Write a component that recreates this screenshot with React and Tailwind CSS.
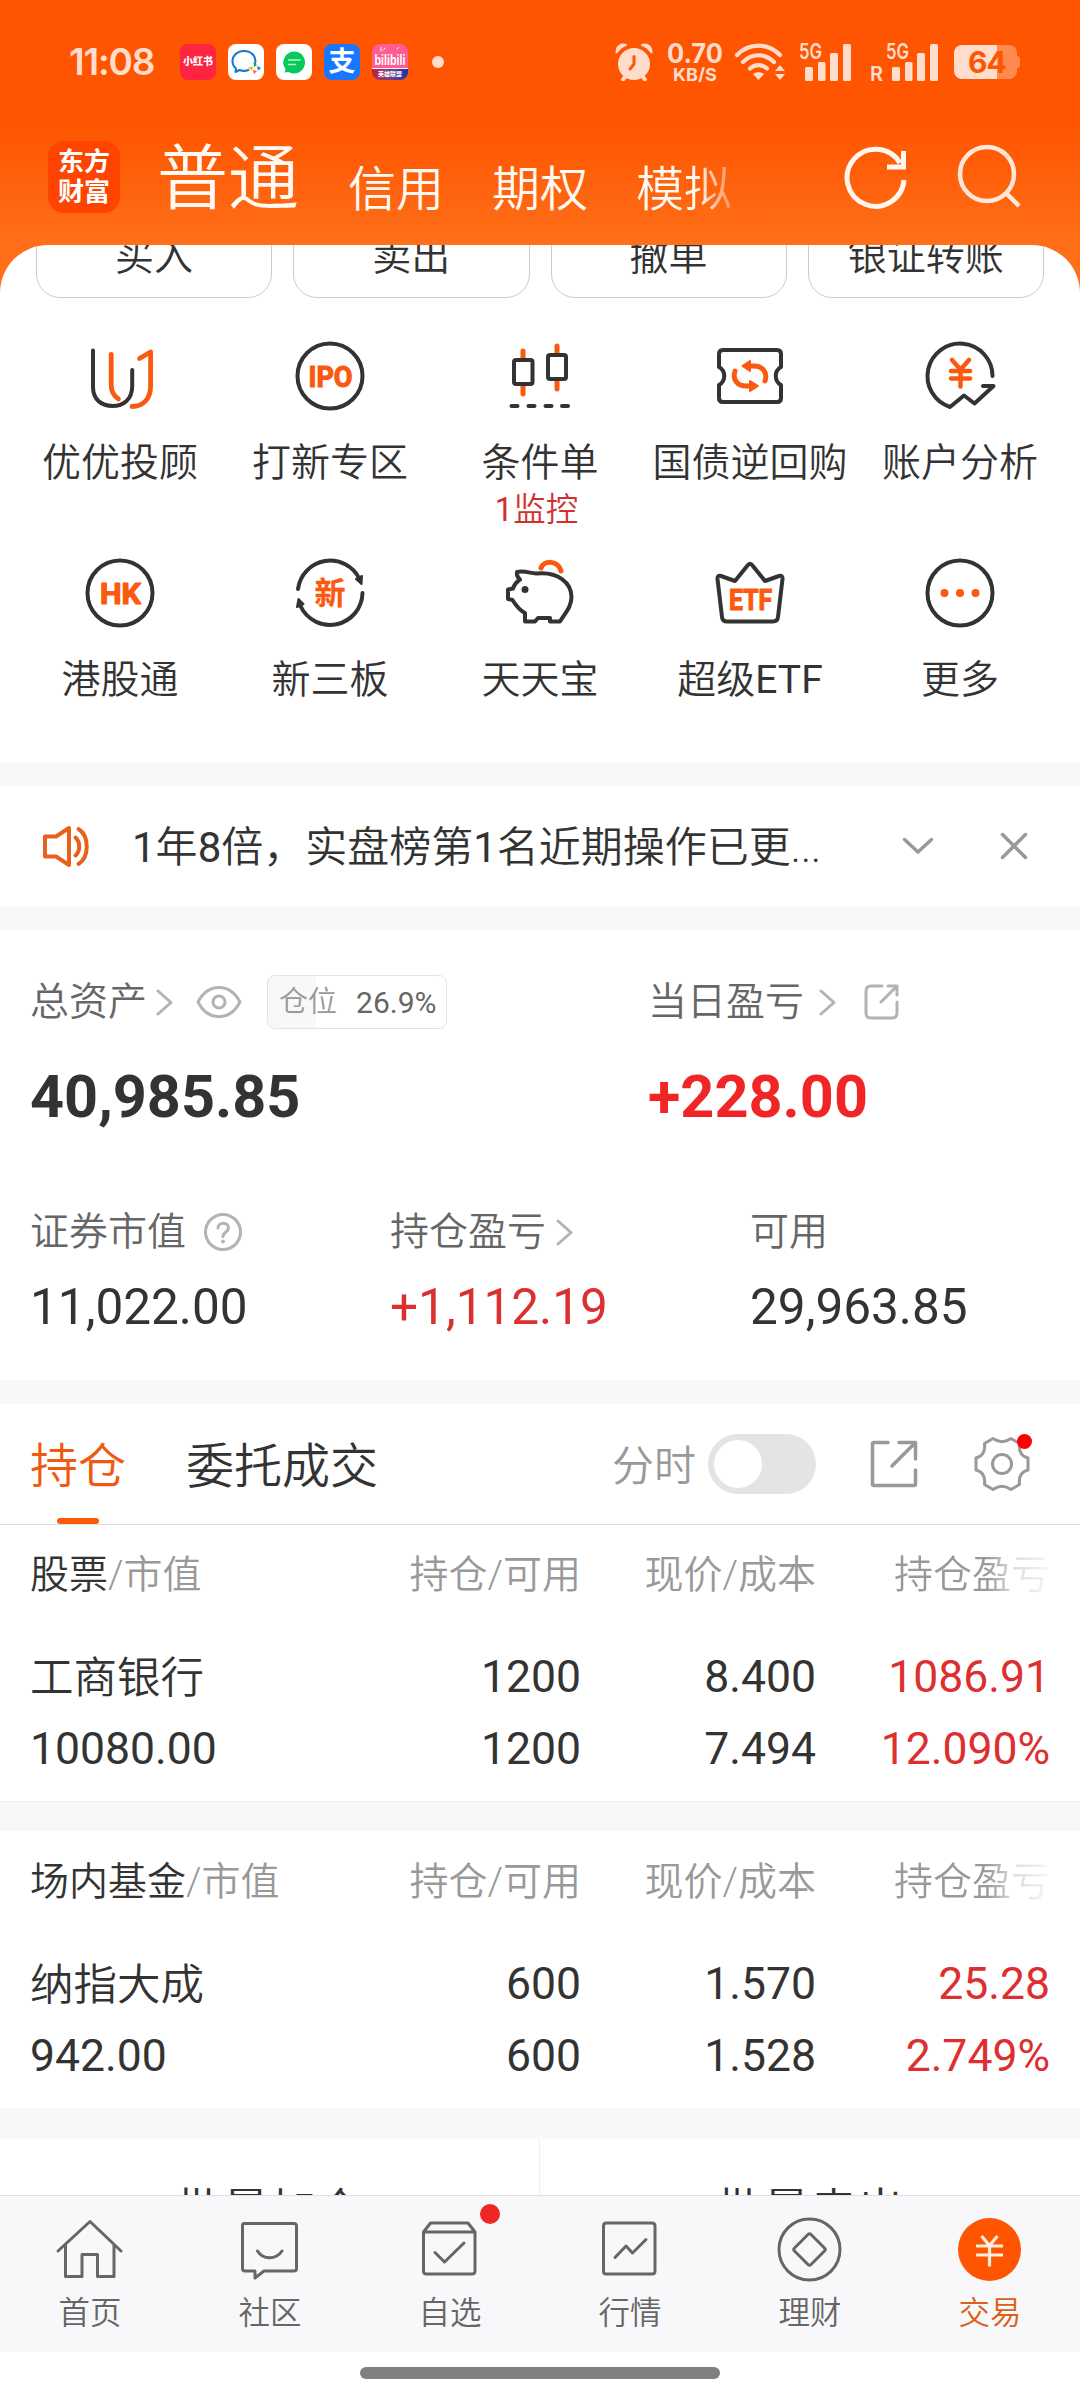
import React from "react";

const D = "#333333";
const O = "#fa5a0f";

function Icon({ box, size, children, className = "" }) {
  const [w, h] = size;
  return (
    <svg viewBox={box} width={w} height={h} fill="none" strokeLinecap="round" strokeLinejoin="round" className={"block shrink-0 " + className}>
      {children}
    </svg>
  );
}

// Latin letters and digits keep the regular weight beside the lighter Chinese glyphs.
function Mixed({ children }) {
  return children.split(/([0-9A-Za-z]+)/).map((part, i) =>
    i % 2 ? <span key={i} className="font-normal">{part}</span> : part
  );
}

function SignalBars() {
  return (
    <g fill="#ffddcc" stroke="none">
      <rect x="0" y="23" width="8" height="14" rx="1.5" />
      <rect x="13" y="18" width="7.5" height="19" rx="1.5" />
      <rect x="25" y="9" width="8" height="28" rx="1.5" />
      <rect x="38" y="0" width="8" height="37" rx="1.5" />
    </g>
  );
}

function StatusBar() {
  return (
    <div className="flex h-[124px] items-center">
      <div className="ml-[69px] w-[111px] font-['Inter'] text-[37px] font-semibold leading-[44px] tracking-[-1.2px] text-[#ffddcc]">11:08</div>
      <div className="flex gap-[12px]">
        <div className="flex size-[36px] items-center justify-center whitespace-nowrap rounded-[8px] bg-[#ff2442] text-[10px] font-black leading-[16px] text-white">小红书</div>
        <div className="size-[36px] rounded-[8px] bg-white">
          <Icon box="0 0 36 36" size={[36, 36]}>
            <path d="M27 20 C29 12 23 7 16 7 C9 7 4 12 4.500 18 C4.800 21 6 23 8 24.500 L7.500 28 L11.500 26 C14 27 18 27 20.500 26" stroke="#1677cf" strokeWidth="2" />
            <path d="M25.500 18 L29 21 L26 23 Z" fill="#2f9e4f" />
            <path d="M29 22 L33 24 L30 26.500 Z" fill="#1677cf" />
            <path d="M25 26 L29 27 L26 30 Z" fill="#f5632a" />
            <path d="M20 23.500 L25 22.500 L24 26.500 Z" fill="#f7b500" />
          </Icon>
        </div>
        <div className="size-[36px] rounded-[8px] bg-white">
          <Icon box="0 0 36 36" size={[36, 36]}>
            <path d="M18 7.500 A11 11 0 1 1 12.500 28 L8.500 28.500 L9.500 25 A11 11 0 0 1 18 7.500" fill="#07c95a" />
            <path d="M12.500 16 H24 M12.500 20.500 H19.500" stroke="#baf3d0" strokeWidth="1.600" />
          </Icon>
        </div>
        <div className="flex size-[36px] items-center justify-center rounded-[8px] bg-[#1677ff] text-[27px] font-bold leading-[36px] text-white">支</div>
        <div className="flex size-[36px] flex-col overflow-hidden rounded-[8px] bg-[#ff5c93]">
          <Icon box="0 0 36 24" size={[36, 24]}>
            <path d="M9 7 V3.500 M11.500 6 L13 4 M25 5 L26.500 3.500" stroke="white" strokeWidth="1" />
            <text x="18" y="20.500" fill="white" fontFamily="Liberation Sans" fontWeight="700" fontSize="14" textAnchor="middle" textLength="31" lengthAdjust="spacingAndGlyphs">bilibili</text>
          </Icon>
          <div className="h-[12px] whitespace-nowrap border-t border-white bg-gradient-to-r from-[#c4123f] to-[#1d2bb0] text-center text-[6px] font-bold leading-[10px] text-white">英雄联盟</div>
        </div>
      </div>
      <div className="ml-[24px] size-[12px] rounded-full bg-[#ffddcc]" />
      <Icon box="0 0 38 38" size={[38, 38]} className="ml-[171px]">
        <circle cx="19" cy="21" r="16" fill="#ffddcc" />
        <path d="M8 36.500 L11 33 M30 36.500 L27 33" stroke="#ffddcc" strokeWidth="4" />
        <path d="M1.500 9.500 C1.500 3 6 0.500 11 2 C7 3 4 6 1.500 9.500 M36.500 9.500 C36.500 3 32 0.500 27 2 C31 3 34 6 36.500 9.500" fill="#ffddcc" stroke="#ffddcc" strokeWidth="2" />
        <path d="M19 13.500 V21 L15 26" stroke="#ff5500" strokeWidth="3" />
      </Icon>
      <Icon box="0 0 60 40" size={[60, 40]} className="ml-[12px]">
        <g fill="#ffddcc" fontFamily="Inter" fontWeight="700" textAnchor="middle">
          <text x="30" y="21" fontSize="27" textLength="56" lengthAdjust="spacingAndGlyphs">0.70</text>
          <text x="30" y="38.500" fontSize="18" textLength="44" lengthAdjust="spacingAndGlyphs">KB/S</text>
        </g>
      </Icon>
      <Icon box="0 0 52 38" size={[52, 38]} className="ml-[9px]">
        <g stroke="#ffddcc" strokeWidth="4.200">
          <path d="M3 12 C15 -0.500 34 -0.500 46 12" />
          <path d="M9 19 C18 10 31 10 40 19" />
          <path d="M16 25.500 C21 21 28 21 33 25.500" />
        </g>
        <path d="M19 31 C22 28.500 27 28.500 30 31 L24.500 37 Z" fill="#ffddcc" />
        <path d="M41 28 L46 22 L51 28 Z M41 31 L46 37 L51 31 Z" fill="#ffddcc" />
      </Icon>
      <Icon box="0 0 52 38" size={[52, 38]} className="ml-[13px]">
        <text x="0" y="16" fill="#ffddcc" fontFamily="Inter" fontWeight="600" fontSize="21" textLength="23" lengthAdjust="spacingAndGlyphs">5G</text>
        <g transform="translate(6,1)"><SignalBars /></g>
      </Icon>
      <Icon box="0 0 70 38" size={[70, 38]} className="ml-[19px]">
        <text x="0" y="37.500" fill="#ffddcc" fontFamily="Inter" fontWeight="600" fontSize="20" textLength="13" lengthAdjust="spacingAndGlyphs">R</text>
        <text x="16" y="16" fill="#ffddcc" fontFamily="Inter" fontWeight="600" fontSize="21" textLength="23" lengthAdjust="spacingAndGlyphs">5G</text>
        <g transform="translate(22,1)"><SignalBars /></g>
      </Icon>
      <div className="ml-[14px] flex items-center">
        <div className="flex h-[34px] w-[63px] items-center justify-center rounded-[8px] bg-[linear-gradient(90deg,#ffddcc_68%,#ff8a50_68%)] pl-[3px] font-['Inter'] text-[30px] font-bold leading-[34px] tracking-[-1px] text-[#ff5500]">64</div>
        <div className="h-[12px] w-[3px] rounded-r-[3px] bg-[#ff8a50]" />
      </div>
    </div>
  );
}

function TopBar() {
  return (
    <div className="flex h-[121px] items-start text-[48px] leading-[56px] text-[#fffaf3]">
      <div className="ml-[48px] mt-[17px] flex h-[72px] w-[72px] flex-col items-center justify-center rounded-[16px] bg-[#ff4400] text-[26px] font-bold leading-[30px] text-white">
        <span>东方</span>
        <span>财富</span>
      </div>
      <span className="ml-[37px] mt-[13px] text-[71px] leading-[84px]">普通</span>
      <div className="mt-[38px] flex w-[466px] gap-[48px] pl-[49px]">
        <span>信用</span>
        <span>期权</span>
        <span className="bg-gradient-to-r from-[#fffaf3] from-[62%] to-[#ff8f55] to-[100%] bg-clip-text text-transparent">模拟</span>
      </div>
      <Icon box="843 145 66 66" size={[66, 66]} className="ml-[78px] mt-[21px]">
        <path d="M904 180 A28.500 28.500 0 1 1 900 163 M903.500 151 V167 H887" stroke="#fff6ee" strokeWidth="5" strokeLinecap="butt" strokeLinejoin="miter" />
      </Icon>
      <Icon box="956 143 66 66" size={[66, 66]} className="ml-[47px] mt-[19px]">
        <circle cx="987" cy="174" r="27" stroke="#ffe6d8" strokeWidth="4.500" />
        <path d="M1006 193 L1019 206" stroke="#ffe6d8" strokeWidth="4.500" strokeLinecap="butt" />
      </Icon>
    </div>
  );
}

const orangeText = { fill: O, stroke: O, strokeWidth: 1.2, fontFamily: "Roboto, 'Noto Sans CJK SC', sans-serif", fontWeight: 700, textAnchor: "middle" };

const entries = [
  { label: "优优投顾", box: "80 336 80 80", art: (
    <g strokeWidth="4">
      <path d="M93 350.500 V387 C93 400 102 406 112.500 406 C123 406 132.200 400 132.200 386 V370" stroke={D} />
      <path d="M111.200 354.500 V385 C111.200 392 114 396 118.500 399 M139.500 358.500 L150.600 352 V386 C150.600 398 144 406.500 132 406.500" stroke={O} strokeWidth="4.800" />
    </g>) },
  { label: "打新专区", box: "290 336 80 80", art: (
    <g>
      <circle cx="330" cy="376" r="32.500" stroke={D} strokeWidth="4" />
      <text x="330.500" y="386.500" fontSize="30" textLength="44" lengthAdjust="spacingAndGlyphs" {...orangeText}>IPO</text>
    </g>) },
  { label: "条件单", note: "1监控", box: "500 336 80 80", art: (
    <g strokeWidth="4">
      <path d="M523 351 V358 M523 386 V394 M557 346 V353 M557 381 V389" stroke={O} strokeWidth="5" />
      <rect x="514" y="360" width="18.500" height="24" rx="2" stroke={D} />
      <rect x="548" y="355" width="18" height="24" rx="2" stroke={D} />
      <path d="M511.500 406 H517.500 M528.500 406 H534.500 M545.500 406 H551.500 M562 406 H568" stroke={D} />
    </g>) },
  { label: "国债逆回购", box: "710 336 80 80", art: (
    <g strokeWidth="4">
      <path d="M723 350 H777 Q781 350 781 354 V367 C774 371 774 381 781 385 V398 Q781 402 777 402 H723 Q719 402 719 398 V385 C726 381 726 371 719 367 V354 Q719 350 723 350 Z" stroke={D} />
      <path d="M735 371 C732 380 738 386 746 386 H751 M765 381 C768 372 762 366 754 366 H749" stroke={O} strokeWidth="5" />
      <path d="M750 361 V371 L742.500 366 Z M750 381 V391 L758 386 Z" fill={O} stroke={O} strokeWidth="2" />
    </g>) },
  { label: "账户分析", box: "920 336 80 80", art: (
    <g strokeWidth="4">
      <path d="M992.500 376 A32.500 32.500 0 1 0 950 407 L964 395.500 L974.500 403.500 L993.500 386 H983" stroke={D} />
      <path d="M952 360 L960.500 369.500 L969 360 M951 371 H970 M951 378.500 H970 M960.500 370 V386.500" stroke={O} strokeWidth="4.500" />
    </g>) },
  { label: "港股通", box: "80 553 80 80", art: (
    <g>
      <circle cx="120" cy="593" r="32.500" stroke={D} strokeWidth="4" />
      <text x="120.500" y="603.500" fontSize="30" textLength="41" lengthAdjust="spacingAndGlyphs" {...orangeText}>HK</text>
    </g>) },
  { label: "新三板", box: "290 553 80 80", art: (
    <g>
      <path d="M298 589 A32.500 32.500 0 0 1 359.500 579 M362.500 593 A32.500 32.500 0 0 1 300.500 606" stroke={D} strokeWidth="4" />
      <path d="M356 579 L362 576 L361.500 584 Z M297 607 L298.500 599 L303.500 604 Z" fill={D} stroke={D} strokeWidth="2" />
      <text x="330" y="604" fontSize="31" {...orangeText} strokeWidth="0.3">新</text>
    </g>) },
  { label: "天天宝", box: "500 553 80 80", art: (
    <g strokeWidth="4">
      <path d="M541 568 C544 560 558 560 561 571" stroke={O} strokeWidth="5" />
      <path d="M517 572 C524 570.500 530 573 536 573.500 C558 571 571.500 583 571.500 597 C571.500 607 565 613 560 621.500 H550 V618 H538 L535 621.500 H525 V613 C519 610 515 604 512.500 600 L508 599 V589.500 L513 588.500 C514.500 584 517 581.500 520 579.500 C517 577 516.500 575 517 572 Z" stroke={D} />
      <circle cx="525" cy="589.500" r="3.500" fill={D} />
    </g>) },
  { label: "超级ETF", box: "710 553 80 80", art: (
    <g>
      <path d="M722 617 L717.500 579 Q717.200 575 721 576 L735 581 L747.500 565.500 Q750 562 752.500 565.500 L765 581 L779 576 Q782.800 575 782.500 579 L778 617 Q777.500 621.500 773 621.500 H727 Q722.500 621.500 722 617 Z" stroke={D} strokeWidth="4" />
      <text x="750.500" y="610" fontSize="30" textLength="43" lengthAdjust="spacingAndGlyphs" {...orangeText}>ETF</text>
    </g>) },
  { label: "更多", box: "920 553 80 80", art: (
    <g>
      <circle cx="960" cy="593" r="32.500" stroke={D} strokeWidth="4" />
      <g fill={O}><circle cx="944.500" cy="593" r="4" /><circle cx="960" cy="593" r="4" /><circle cx="975.500" cy="593" r="4" /></g>
    </g>) },
];

function QuickPanel() {
  return (
    <section className="h-[517px] overflow-hidden rounded-t-[48px] bg-white text-[39px]">
      <div className="-mt-[31px] flex gap-[21px] px-[36px]">
        {["买入", "卖出", "撤单", "银证转账"].map((t) => (
          <div key={t} className="flex h-[84px] flex-1 items-center justify-center rounded-[24px] border border-[#cccccc] pt-px leading-[48px]">{t}</div>
        ))}
      </div>
      <div className="grid auto-rows-[217px] grid-cols-5 px-[15px] pt-[38px]">
        {entries.map((e) => (
          <div key={e.label} className="flex flex-col items-center">
            <Icon box={e.box} size={[80, 80]}>{e.art}</Icon>
            <span className="mt-[23px] whitespace-nowrap leading-[48px]"><Mixed>{e.label}</Mixed></span>
            {e.note && <span className="mt-[5px] pr-[7px] text-[32.500px] leading-[36px] text-[#d23030]"><Mixed>{e.note}</Mixed></span>}
          </div>
        ))}
      </div>
    </section>
  );
}

function Notice() {
  return (
    <section className="flex h-[120px] items-center bg-white">
      <Icon box="40 823 52 46" size={[52, 46]} className="ml-[40px]">
        <path d="M45 836.500 H56 L69 828 V865 L56 856.500 H45 Z M75.500 837.500 C80.500 842 80.500 851 75.500 855.500 M78.500 829 C89.500 836 89.500 857 78.500 864" stroke="#e8601c" strokeWidth="4" />
      </Icon>
      <p className="ml-[40px] mt-[3px] w-[690px] overflow-hidden whitespace-nowrap text-[42px] leading-[60px]"><Mixed>1年8倍，实盘榜第1名近期操作已更...</Mixed></p>
      <Icon box="0 0 32 18" size={[32, 18]} className="ml-[80px]">
        <path d="M2.500 2.500 L16 15 L29.500 2.500" stroke="#999" strokeWidth="3.500" />
      </Icon>
      <Icon box="0 0 28 28" size={[28, 28]} className="ml-[66px]">
        <path d="M2.500 2.500 L25.500 25.500 M25.500 2.500 L2.500 25.500" stroke="#999" strokeWidth="3.500" />
      </Icon>
    </section>
  );
}

function Chevron({ className }) {
  return (
    <Icon box="0 0 17 27" size={[17, 27]} className={className}>
      <path d="M2 2 L15 13.500 L2 25" stroke="#b3b3b3" strokeWidth="3" />
    </Icon>
  );
}

function Assets() {
  return (
    <section className="h-[450px] bg-white pl-[30px] pr-[30px] pt-[43px] text-[39px]">
      <div className="flex h-[58px] items-center text-[#666]">
        <div className="flex w-[618px] items-center">
          <span>总资产</span>
          <Chevron className="ml-[9px]" />
          <Icon box="0 0 46 34" size={[46, 34]} className="ml-[23px]">
            <path d="M2 17 C12 -2.500 34 -2.500 44 17 C34 36.500 12 36.500 2 17 Z" stroke="#b3b3b3" strokeWidth="3" />
            <circle cx="23" cy="17" r="6" stroke="#b3b3b3" strokeWidth="3" />
          </Icon>
          <div className="ml-[25px] flex h-[54px] w-[180px] items-center rounded-[8px] border border-[#e3e4e8] bg-[linear-gradient(90deg,#f7f8fa_27%,#fff_27%)] text-[30px]">
            <span className="ml-[11px] mt-px text-[29px] text-[#999]">仓位</span>
            <span className="ml-[19px] font-normal">26.9%</span>
          </div>
        </div>
        <span>当日盈亏</span>
        <Chevron className="ml-[15px]" />
        <Icon box="0 0 36 36" size={[36, 36]} className="ml-[28px]">
          <path d="M18 2 H7 Q2 2 2 7 V29 Q2 34 7 34 H28 Q33 34 33 29 V18 M24 2 H33 V11 M33 2 L17 18" stroke="#b3b3b3" strokeWidth="3" />
        </Icon>
      </div>
      <div className="mt-[31px] flex h-[70px] items-center text-[59.400px] font-bold leading-[70px]">
        <span className="w-[618px]">40,985.85</span>
        <span className="text-[#f02626]">+228.00</span>
      </div>
      <div className="mt-[70px] grid h-[60px] grid-cols-[360px_360px_1fr] items-center text-[#666]">
        <div className="flex items-center">
          <span>证券市值</span>
          <Icon box="0 0 40 40" size={[40, 40]} className="ml-[17px]">
            <circle cx="20" cy="20" r="17.500" stroke="#b3b3b3" strokeWidth="3" />
            <path d="M15 16 C15 9.500 25.500 9.500 25.500 16 C25.500 20 20 20 20 24.500" stroke="#b3b3b3" strokeWidth="3" />
            <circle cx="20" cy="29.500" r="1.900" fill="#b3b3b3" />
          </Icon>
        </div>
        <div className="flex items-center">
          <span>持仓盈亏</span>
          <Chevron className="ml-[10px]" />
        </div>
        <span>可用</span>
      </div>
      <div className="mt-[8px] grid h-[60px] grid-cols-[360px_360px_1fr] items-center text-[49.500px] font-normal">
        <span>11,022.00</span>
        <span className="text-[#dc2f2f]">+1,112.19</span>
        <span>29,963.85</span>
      </div>
    </section>
  );
}

function Tabs() {
  return (
    <div className="flex h-[121px] items-stretch border-b border-[#dddddd] bg-white pl-[30px] text-[48px]">
      <div className="flex w-[96px] flex-col items-center text-[#f0590f]">
        <span className="mt-[34px] leading-[58px]">持仓</span>
        <span className="mt-auto h-[6px] w-[42px] rounded-[3px] bg-[#fa5a0a]" />
      </div>
      <span className="ml-[60px] mt-[34px] leading-[58px]">委托成交</span>
      <span className="ml-[234px] mt-[34px] text-[42px] leading-[58px] text-[#999]">分时</span>
      <div className="ml-[12px] mt-[30px] h-[60px] w-[108px] rounded-full bg-[#e4e4e6] p-[6px]">
        <div className="size-[48px] rounded-full bg-white" />
      </div>
      <Icon box="0 0 48 48" size={[48, 48]} className="ml-[54px] mt-[36px]">
        <path d="M18 2.500 H4 Q2.500 2.500 2.500 4 V44 Q2.500 45.500 4 45.500 H44 Q45.500 45.500 45.500 44 V30 M29 2.500 H45.500 V19 M45.500 2.500 L22 26" stroke="#999" strokeWidth="3.500" />
      </Icon>
      <div className="relative ml-[56px] mt-[32px] size-[56px]">
        <Icon box="-28 -28 56 56" size={[56, 56]}>
          <path d="M-9 -25.500 Q0 -19 9 -25.500 L17.500 -20.500 Q16 -8.500 26 -6 V6 Q16 8.500 17.500 20.500 L9 25.500 Q0 19 -9 25.500 L-17.500 20.500 Q-16 8.500 -26 6 V-6 Q-16 -8.500 -17.500 -20.500 Z" stroke="#999" strokeWidth="3" />
          <circle cx="0" cy="0" r="9.500" stroke="#999" strokeWidth="3" />
        </Icon>
        <span className="absolute -top-[2px] right-[-2px] size-[15px] rounded-full bg-[#ff0000]" />
      </div>
    </div>
  );
}

const cols = "grid grid-cols-[1fr_250px_235px_234px] items-center pl-[30px] pr-[30px]";

function Holding({ title, name, value, qty, avail, price, cost, pl, rate, border }) {
  return (
    <section className={"bg-white " + border}>
      <div className={cols + " h-[60px] pt-[2px] text-right text-[39px] text-[#999]"}>
        <span className="text-left"><span className="text-[#333]">{title}</span>/市值</span>
        <span>持仓/可用</span>
        <span>现价/成本</span>
        <span className="ml-auto w-[156px] bg-gradient-to-r from-[#999] from-[60%] via-[#dcdcdc] via-[76%] to-[#f6f6f6] bg-clip-text text-transparent">持仓盈亏</span>
      </div>
      <div className={cols + " mt-[37px] h-[72px] text-right text-[44.500px] font-normal"}>
        <span className="mt-[3px] text-left text-[43.500px] font-[350]">{name}</span>
        <span>{qty}</span>
        <span>{price}</span>
        <span className="text-[#dc2f2f]">{pl}</span>
      </div>
      <div className={cols + " h-[72px] text-right text-[44.500px] font-normal"}>
        <span className="text-left">{value}</span>
        <span>{avail}</span>
        <span>{cost}</span>
        <span className="text-[#dc2f2f]">{rate}</span>
      </div>
    </section>
  );
}

const navItems = [
  { label: "首页", box: "54 2214 72 72", art: <path d="M58 2251 L90 2221.500 L121 2251 M65.500 2245 V2276.500 H82 V2254.500 H97.500 V2276.500 H114 V2245" /> },
  { label: "社区", box: "234 2214 72 72", art: <path d="M244 2223.500 H294 Q296.500 2223.500 296.500 2226 V2268.500 Q296.500 2271 294 2271 H264 L255 2278 V2271 H245 Q242.500 2271 242.500 2268.500 V2226 Q242.500 2223.500 244 2223.500 Z M257.500 2251 C263 2260 276 2260 282 2251" /> },
  { label: "自选", dot: true, box: "414 2214 72 72", art: <path d="M423.500 2232 L430.500 2223 H468 L475 2232 V2271 Q475 2274 472 2274 H426.500 Q423.500 2274 423.500 2271 Z H475 M435 2252.500 L444.500 2262 L464 2243" /> },
  { label: "行情", box: "594 2214 72 72", art: <path d="M606 2223 H652 Q655 2223 655 2226 V2271 Q655 2274 652 2274 H606 Q603.500 2274 603.500 2271 V2226 Q603.500 2223 606 2223 Z M615 2257.500 L626 2246 L632.500 2253 L646 2239.500" /> },
  { label: "理财", box: "774 2214 72 72", art: <g><circle cx="809.500" cy="2249.500" r="30.500" /><path d="M808 2234.500 L794.500 2248 Q793 2249.500 794.500 2251 L808 2264.500 Q809.500 2266 811 2264.500 L824.500 2251 Q826 2249.500 824.500 2248 L811 2234.500 Q809.500 2233 808 2234.500 Z" /></g> },
  { label: "交易", active: true, box: "954 2214 72 72", art: <g><circle cx="989.500" cy="2249.500" r="31.500" fill="#ff5500" stroke="none" /><path d="M981.500 2236 L989.500 2245.500 L997.500 2236 M976 2246 H1003 M976 2255 H1003 M989.500 2245 V2266.500" stroke="#ffeee0" strokeWidth="3.200" strokeLinecap="butt" /></g> },
];

function BottomNav() {
  return (
    <nav className="grid h-[157px] grid-cols-6 border-t border-[#e0e1e4] bg-[#f8f8fa]">
      {navItems.map((n) => (
        <div key={n.label} className={"relative flex flex-col items-center pt-[18px] text-[31.500px] " + (n.active ? "text-[#dc6019]" : "text-[#666]")}>
          <Icon box={n.box} size={[72, 72]}><g stroke="#666" strokeWidth="3">{n.art}</g></Icon>
          <span className="mt-[8px] leading-[40px]">{n.label}</span>
          {n.dot && <span className="absolute left-[120px] top-[8px] size-[20px] rounded-full bg-[#f02626]" />}
        </div>
      ))}
    </nav>
  );
}

export default function App() {
  return (
    <div className="flex h-[2400px] w-[1080px] flex-col overflow-hidden bg-[#f7f8fa] font-['Roboto','Noto_Sans_CJK_SC',sans-serif] font-[350] text-[#333]">
      <div className="bg-[linear-gradient(180deg,#ff5500_0px,#ff5500_125px,#ff6f1a_245px,#ff6f1a_300px)]">
        <StatusBar />
        <TopBar />
        <QuickPanel />
      </div>
      <div className="h-[24px] shrink-0" />
      <Notice />
      <div className="h-[24px] shrink-0" />
      <Assets />
      <div className="h-[24px] shrink-0" />
      <Tabs />
      <Holding border="h-[276px] pt-[19px]" title="股票" name="工商银行" value="10080.00" qty="1200" avail="1200" price="8.400" cost="7.494" pl="1086.91" rate="12.090%" />
      <div className="h-[30px] shrink-0 border-t border-[#ececef]" />
      <Holding border="h-[277px] pt-[20px]" title="场内基金" name="纳指大成" value="942.00" qty="600" avail="600" price="1.570" cost="1.528" pl="25.28" rate="2.749%" />
      <div className="h-[31px] shrink-0" />
      <div className="grid h-[56px] shrink-0 grid-cols-2 overflow-hidden bg-white text-center text-[47px] leading-[143px]">
        <span className="border-r border-[#eeeeee]">批量加仓</span>
        <span>批量卖出</span>
      </div>
      <BottomNav />
      <div className="flex flex-1 justify-center bg-white pt-[15px]">
        <div className="h-[12px] w-[360px] rounded-full bg-[#808080]" />
      </div>
    </div>
  );
}
